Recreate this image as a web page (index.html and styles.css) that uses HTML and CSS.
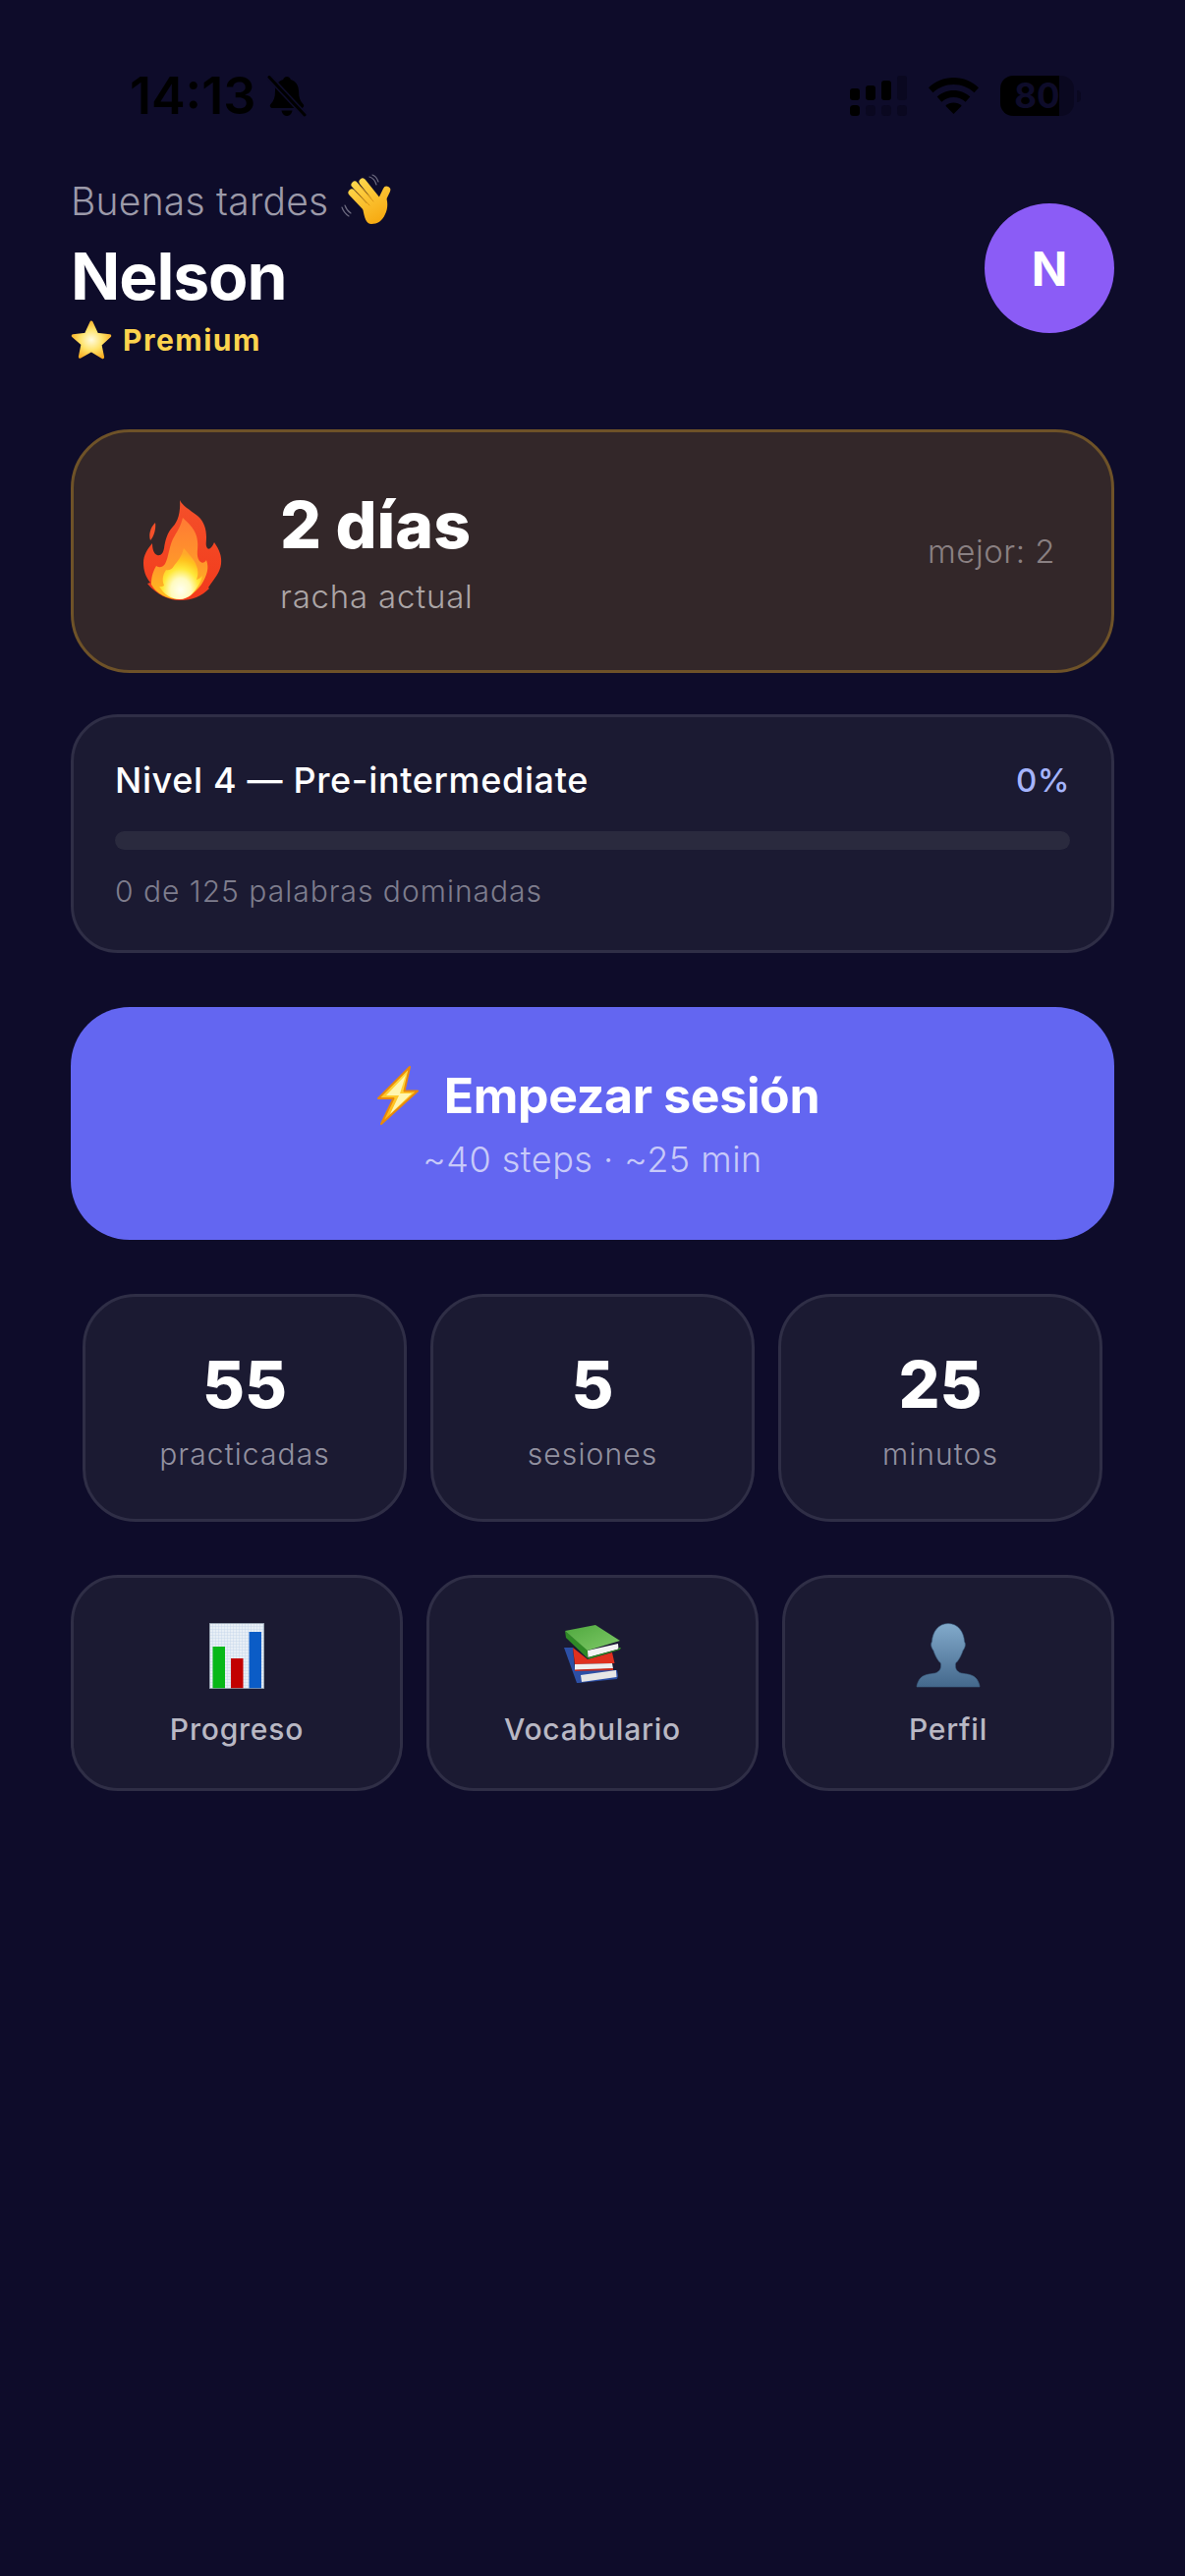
FILE: index.html
```html
<!DOCTYPE html>
<html lang="en">
<head>
  <meta charset="UTF-8" />
  <meta name="viewport" content="width=device-width, initial-scale=1.0"/>
  <title>Inicio</title>
  <link rel="stylesheet" href="styles.css">
</head>
<body>
  <svg class="defs" width="0" height="0">
    <defs>
      <linearGradient id="flameOuter" x1="0" y1="0" x2="0" y2="1">
        <stop offset="0" stop-color="#f4502a"/><stop offset="1" stop-color="#f23a1c"/>
      </linearGradient>
      <linearGradient id="flameMid" x1="0" y1="0" x2="0" y2="1">
        <stop offset="0" stop-color="#ff7a34"/><stop offset="0.6" stop-color="#ff9a2a"/><stop offset="1" stop-color="#ffc01c"/>
      </linearGradient>
      <radialGradient id="flameCore" cx="0.5" cy="0.82" r="0.72">
        <stop offset="0" stop-color="#fffff0"/><stop offset="0.32" stop-color="#fffbc0"/><stop offset="0.58" stop-color="#ffe83a"/><stop offset="0.82" stop-color="#ffc21e"/><stop offset="1" stop-color="#ffa82a"/>
      </radialGradient>
      <radialGradient id="starFill" cx="0.5" cy="0.5" r="0.6">
        <stop offset="0" stop-color="#fffbe0"/><stop offset="0.5" stop-color="#ffe36a"/><stop offset="1" stop-color="#f7a81c"/>
      </radialGradient>
      <linearGradient id="handFill" gradientUnits="userSpaceOnUse" x1="20" y1="15" x2="45" y2="60">
        <stop offset="0" stop-color="#ffd84e"/><stop offset="1" stop-color="#f6a80f"/>
      </linearGradient>
      <linearGradient id="personFill" x1="0" y1="0" x2="0" y2="1">
        <stop offset="0" stop-color="#82aacb"/><stop offset="1" stop-color="#44688c"/>
      </linearGradient>
      <linearGradient id="boltFill" x1="0" y1="0" x2="0" y2="1">
        <stop offset="0" stop-color="#ffe24a"/><stop offset="1" stop-color="#ffb30f"/>
      </linearGradient>
      <linearGradient id="bookGreen" x1="0" y1="0" x2="1" y2="1">
        <stop offset="0" stop-color="#4fa83e"/><stop offset="1" stop-color="#7fc968"/>
      </linearGradient>
      <pattern id="chartGrid" width="3" height="3" patternUnits="userSpaceOnUse">
        <rect width="3" height="3" fill="#e8eff6"/>
        <path d="M0 0H3M0 0V3" stroke="#c3d5e8" stroke-width="0.8"/>
      </pattern>
    </defs>
  </svg>

  <div class="app">
    <div class="statusbar">
      <div class="status-left">
        <span class="time">14:13</span>
        <svg class="bell" viewBox="0 0 40 42">
          <path d="M20 1c-2 0-3.500 1.400-3.800 3C10.500 5.600 8 10.400 8 16c0 6-1.500 10-4.500 13-1.400 1.400-.6 4 1.800 4h29.400c2.400 0 3.200-2.600 1.800-4C33.500 26 32 22 32 16c0-5.600-2.500-10.400-8.200-12C23.500 2.400 22 1 20 1zM14.500 35.500c.6 3.300 2.800 5.500 5.500 5.500s4.900-2.200 5.500-5.500z" fill="#000"/>
          <path d="M2 1.500 38 40" stroke="#0e0c2a" stroke-width="6"/>
          <path d="M2 1.500 38 40" stroke="#000" stroke-width="3" stroke-linecap="round"/>
        </svg>
      </div>
      <div class="status-right">
        <svg class="signal" viewBox="0 0 58 41">
          <rect x="0" y="13" width="10" height="12" rx="3" fill="#000"/>
          <rect x="16" y="10" width="10" height="15" rx="3" fill="#000"/>
          <rect x="32" y="5" width="10" height="20" rx="3" fill="#000"/>
          <rect x="48" y="0" width="10" height="25" rx="3" fill="#0a0820"/>
          <rect x="0" y="30" width="10" height="11" rx="3.500" fill="#000"/>
          <rect x="16" y="30" width="10" height="11" rx="3.500" fill="#0a0820"/>
          <rect x="32" y="30" width="10" height="11" rx="3.500" fill="#0a0820"/>
          <rect x="48" y="30" width="10" height="11" rx="3.500" fill="#0a0820"/>
        </svg>
        <svg class="wifi" viewBox="0 0 51 37">
          <path d="M25.500 0C35.500 0 44.500 4 51 10.300l-4.500 5C41 10.200 33.600 7 25.500 7S10 10.200 4.500 15.300L0 10.300C6.500 4 15.500 0 25.500 0z" fill="#000"/>
          <path d="M25.500 13c6.500 0 12.400 2.500 16.800 6.500l-4.700 5.200c-3.100-3-7.400-4.800-12.100-4.800s-9 1.800-12.100 4.800l-4.700-5.200C13.100 15.500 19 13 25.500 13z" fill="#000"/>
          <path d="M25.500 25.500c3.200 0 6 1.200 8.200 3.200L25.500 37l-8.200-8.300c2.200-2 5-3.200 8.200-3.200z" fill="#000"/>
        </svg>
        <div class="battery">
          <div class="battery-body">80</div>
          <div class="battery-tip"></div>
        </div>
      </div>
    </div>

    <header class="header">
      <div class="greeting">
        <div class="hello">
          Buenas tardes
          <svg class="wave" viewBox="0 0 70 70">
            <g stroke="#6d6b80" stroke-width="1.200" fill="none" stroke-linecap="round">
              <path d="M37 11c3 1 6 4 7 8"/><path d="M40 9c3 1 5 4 6 7"/>
              <path d="M9 42c1 3 4 7 7 9"/><path d="M12 40c1 3 3 6 6 8"/>
            </g>
            <g stroke="url(#handFill)" stroke-linecap="round" fill="none" stroke-width="7">
              <path d="M19 27 36 45"/>
              <path d="M22 19 40 39"/>
              <path d="M30 16 46 36"/>
              <path d="M54.500 24.500 47 40" stroke-width="7.500"/>
            </g>
            <path d="M30 42 43 30l6 6 4-6c3 5 3 13 0 19-3 7-8 10-14 10-5 0-7-5-9-17z" fill="url(#handFill)"/>
            <g stroke="#d28a0c" stroke-width="0.800" fill="none" stroke-linecap="round">
              <path d="M23 25 37 40"/><path d="M27 20 41 36"/>
            </g>
          </svg>
        </div>
        <h1 class="name">Nelson</h1>
        <div class="plan">
          <svg class="star" viewBox="0 0 40 40">
            <path d="M20 3l5.300 11.500 12.500 1.500-9.300 8.500 2.500 12.300L20 30.200 9 36.300l2.500-12.300L2.200 16l12.500-1.500z" fill="url(#starFill)" stroke="url(#starFill)" stroke-width="3" stroke-linejoin="round"/>
          </svg>
          <span>Premium</span>
        </div>
      </div>
      <div class="avatar">N</div>
    </header>

    <section class="streak">
      <svg class="flame" viewBox="0 0 80 104">
        <path d="M37 0c2 5 10 10 18 16 7 6 9 14 9 22 0 5-1 8 1 11 2 2 5-1 7-6 5 7 8 14 7 22-1 9-7 15-13 24l1 1c-8 8-17 12-30 12-11 0-24-6-33-17l3-1C2 78 0 71 0 64c0-8 4-14 9-20 0 4 1 11 5 12 4 1 6-2 7-7 1-7 3-16 9-22 5-5 8-15 7-27z" fill="url(#flameOuter)"/>
        <path d="M12 23c1 5-1 14-5 18-2-6 0-13 5-18z" fill="#f4502a"/>
        <path d="M40 18c6 6 14 12 15 24 1 8-2 14 2 20 3 3 5 2 7-1 3 8 1 15-5 25-7 9-15 15-23 15-12 0-23-6-28-15 0-7 1-12 5-19 3 2 6 2 9-2 4-7 4-20 10-29 3-5 6-10 8-18z" fill="url(#flameMid)"/>
        <path d="M41 49c5 6 12 12 14 21 1 5 0 8-1 11 3-1 4-2 6-4-1 7-7 15-12 20-3 2-7 4-11 4-9 0-16-5-21-13 2 0 4 0 5-1-2-5-2-10 2-16 2 1 6 0 8-4 4-5 8-10 10-18z" fill="url(#flameCore)"/>
      </svg>
      <div class="streak-info">
        <div class="streak-days">2 días</div>
        <div class="streak-label">racha actual</div>
      </div>
      <div class="streak-best">mejor: 2</div>
    </section>

    <section class="level">
      <div class="level-top">
        <span class="level-name">Nivel 4 — Pre-intermediate</span>
        <span class="level-pct">0%</span>
      </div>
      <div class="level-bar"></div>
      <div class="level-sub">0 de 125 palabras dominadas</div>
    </section>

    <button class="start">
      <span class="start-title">
        <svg class="bolt" viewBox="0 0 42 60">
          <path d="M33 1 1 33h15.500L4 59l37-33.500H27.500z" fill="url(#boltFill)" stroke="#e8890c" stroke-width="2" stroke-linejoin="round"/>
          <path d="M29 9 9 30h13L13 49l22-21H23z" fill="#fff6b0"/>
        </svg>
        Empezar sesión
      </span>
      <span class="start-sub">~40 steps · ~25 min</span>
    </button>

    <section class="stats">
      <div class="stat"><div class="stat-num">55</div><div class="stat-label">practicadas</div></div>
      <div class="stat"><div class="stat-num">5</div><div class="stat-label">sesiones</div></div>
      <div class="stat"><div class="stat-num">25</div><div class="stat-label">minutos</div></div>
    </section>

    <nav class="links">
      <a class="link">
        <svg class="link-icon chart" viewBox="0 0 56 67">
          <rect width="56" height="67" fill="url(#chartGrid)"/>
          <rect x="3.500" y="24" width="12.500" height="43" fill="#08b818"/>
          <rect x="22" y="36" width="12.500" height="31" fill="#c20000"/>
          <rect x="40.500" y="9" width="12.500" height="58" fill="#0b5cc6"/>
          <rect x="0.400" y="0.400" width="55.200" height="66.200" fill="none" stroke="#8b97a6" stroke-width="0.800"/>
        </svg>
        <span>Progreso</span>
      </a>
      <a class="link">
        <svg class="link-icon books" viewBox="0 0 75 75">
          <path d="M8 32h9l2 22 43 1 1 6-1 3-39 4h-2z" fill="#2c4fa5"/>
          <path d="M25 60l36-5 .5 7L26 67z" fill="#e6e6e6"/>
          <path d="M17 32l15 12 25-7 2.500 11L19 49z" fill="#e0301f"/>
          <path d="M19 49l38-1 1 5.500-39 1.500z" fill="#efefef"/>
          <path d="M19 54.500 58 53v2l-39 1z" fill="#c42a1e"/>
          <path d="M9 15l1 7 22 21 1-8z" fill="#2f8a26"/>
          <path d="M32 35l31-7 .5 5.500L32.500 42z" fill="#f3f3f3"/>
          <path d="M32.500 42l31-8.500.5-1.500 2 0-1 2-32.500 10z" fill="#2f8a26"/>
          <path d="M9 15 40 9l25 16-33 10z" fill="url(#bookGreen)"/>
        </svg>
        <span>Vocabulario</span>
      </a>
      <a class="link">
        <svg class="link-icon person" viewBox="0 0 90 80">
          <path d="M45 7.500C55 7.500 61 16 61.500 26 63 28 62.500 32 60 35 58 41 55 46 52.500 48 52 53 53 56 58 58 64 59 70 59 74 64 76 67 77 70 77 72H13C13 70 14 67 16 64 20 59 26 59 32 58 37 56 38 53 37.500 48 35 46 32 41 30 35 27.500 32 27 28 28.500 26 29 16 35 7.500 45 7.500Z" fill="url(#personFill)" stroke="#3d5f82" stroke-width="0.600"/>
        </svg>
        <span>Perfil</span>
      </a>
    </nav>
  </div>
</body>
</html>
```

FILE: styles.css
```css
* {
  box-sizing: border-box;
}

html, body {
  margin: 0;
  min-height: 100%;
}

body {
  background: #0e0c2a;
  font-family: 'Inter', sans-serif;
  color: #fff;
  height: 2622px;
  overflow: hidden;
}

.defs {
  display: block;
  height: 0;
}

.app {
  padding: 77px 72px 0;
  display: flex;
  flex-direction: column;
}

/* status bar */
.statusbar {
  display: flex;
  justify-content: space-between;
  align-items: center;
  height: 41px;
  padding-left: 60px;
}

.status-left {
  display: flex;
  align-items: center;
  gap: 12px;
}

.time {
  font-size: 52px;
  font-weight: 600;
  line-height: 41px;
  color: #000;
}

.bell {
  width: 40px;
  height: 42px;
}

.status-right {
  display: flex;
  align-items: center;
  gap: 22px;
  margin-right: 34px;
}

.signal {
  width: 58px;
  height: 41px;
}

.wifi {
  width: 51px;
  height: 37px;
}

.battery {
  display: flex;
  align-items: center;
  gap: 3px;
}

.battery-body {
  width: 75px;
  height: 41px;
  border-radius: 13px;
  background: linear-gradient(90deg, #000 80%, #0a0820 80%);
  color: #0e0c2a;
  font-size: 35px;
  font-weight: 700;
  line-height: 41px;
  text-align: center;
}

.battery-tip {
  width: 4px;
  height: 12px;
  border-radius: 0 4px 4px 0;
  background: #0a0820;
}

/* header */
.header {
  display: flex;
  justify-content: space-between;
  align-items: center;
  margin-top: 59px;
}

.hello {
  display: flex;
  align-items: center;
  gap: 6px;
  height: 54px;
  font-size: 39px;
  font-weight: 300;
  letter-spacing: 0.25px;
  color: #9c9aa9;
}

.wave {
  width: 70px;
  height: 70px;
  margin-left: -2px;
}

.name {
  margin: 11px 0 0;
  font-size: 66px;
  font-weight: 700;
  line-height: 78px;
  letter-spacing: -1.1px;
}

.plan {
  display: flex;
  align-items: center;
  gap: 11px;
  height: 42px;
  margin-top: 5px;
  font-size: 30px;
  font-weight: 700;
  letter-spacing: 1.5px;
  color: #fcd34d;
}

.star {
  width: 42px;
  height: 42px;
}

.avatar {
  width: 132px;
  height: 132px;
  margin-top: 2px;
  border-radius: 50%;
  background: #8b5cf6;
  display: flex;
  align-items: center;
  justify-content: center;
  font-size: 48px;
  font-weight: 700;
}

/* streak */
.streak {
  display: flex;
  align-items: center;
  height: 248px;
  margin-top: 70px;
  padding: 0 57px 0 71px;
  background: #332729;
  border: 3px solid #6e5228;
  border-radius: 60px;
}

.flame {
  width: 80px;
  height: 104px;
  margin-right: 59px;
}

.streak-info {
  flex: 1;
}

.streak-days {
  font-size: 66px;
  font-weight: 800;
  line-height: 80px;
}

.streak-label {
  margin-top: 11px;
  font-size: 33px;
  font-weight: 300;
  line-height: 44px;
  letter-spacing: 0.8px;
  color: #aba5a6;
}

.streak-best {
  font-size: 33px;
  font-weight: 300;
  letter-spacing: 0.5px;
  color: #8a8082;
}

/* level */
.level {
  height: 243px;
  margin-top: 42px;
  padding: 40px 42px 0;
  background: #1b1a32;
  border: 3px solid #2f2e46;
  border-radius: 48px;
}

.level-top {
  display: flex;
  justify-content: space-between;
  align-items: center;
  height: 48px;
}

.level-name {
  font-size: 36px;
  font-weight: 500;
  letter-spacing: 0.65px;
}

.level-pct {
  font-size: 33px;
  font-weight: 500;
  letter-spacing: 0.5px;
  color: #a5b4fc;
}

.level-bar {
  height: 19px;
  margin-top: 28px;
  border-radius: 10px;
  background: #2a2a3e;
}

.level-sub {
  margin-top: 22px;
  font-size: 30px;
  font-weight: 300;
  line-height: 40px;
  letter-spacing: 1px;
  color: #7e7d8d;
}

/* start button */
.start {
  display: flex;
  flex-direction: column;
  align-items: center;
  justify-content: center;
  height: 237px;
  margin-top: 55px;
  border: none;
  border-radius: 60px;
  background: #6366f1;
  color: #fff;
  font-family: inherit;
  padding: 0;
}

.start-title {
  display: flex;
  align-items: center;
  gap: 26px;
  padding-left: 12px;
  margin-top: -2px;
  font-size: 50px;
  font-weight: 700;
  line-height: 66px;
  letter-spacing: -0.35px;
}

.bolt {
  width: 42px;
  height: 60px;
}

.start-sub {
  margin-top: 8px;
  font-size: 36px;
  font-weight: 300;
  line-height: 48px;
  letter-spacing: 0.5px;
  color: #c8caf9;
}

/* stats */
.stats {
  display: flex;
  gap: 24px;
  margin: 55px 12px 0;
}

.stat {
  flex: 1;
  height: 232px;
  padding-top: 2px;
  display: flex;
  flex-direction: column;
  align-items: center;
  justify-content: center;
  background: #1b1a32;
  border: 3px solid #2f2e46;
  border-radius: 54px;
}

.stat-num {
  font-size: 66px;
  font-weight: 800;
  line-height: 80px;
}

.stat-label {
  margin-top: 11px;
  font-size: 30px;
  font-weight: 300;
  line-height: 40px;
  letter-spacing: 1.1px;
  color: #9291a0;
}

/* links */
.links {
  display: flex;
  gap: 24px;
  margin-top: 54px;
}

.link {
  flex: 1;
  height: 220px;
  display: flex;
  flex-direction: column;
  align-items: center;
  padding-top: 46px;
  background: #1b1a32;
  border: 3px solid #2f2e46;
  border-radius: 48px;
  font-size: 30px;
  font-weight: 500;
  letter-spacing: 0.8px;
  color: #b9b8c4;
}

.link-icon {
  display: block;
  flex: none;
}

.chart {
  width: 56px;
  height: 67px;
  margin-bottom: 23px;
}

.books {
  width: 75px;
  height: 75px;
  margin: -7px 0 22px;
}

.person {
  width: 90px;
  height: 80px;
  margin: -7px 0 17px;
}
```
